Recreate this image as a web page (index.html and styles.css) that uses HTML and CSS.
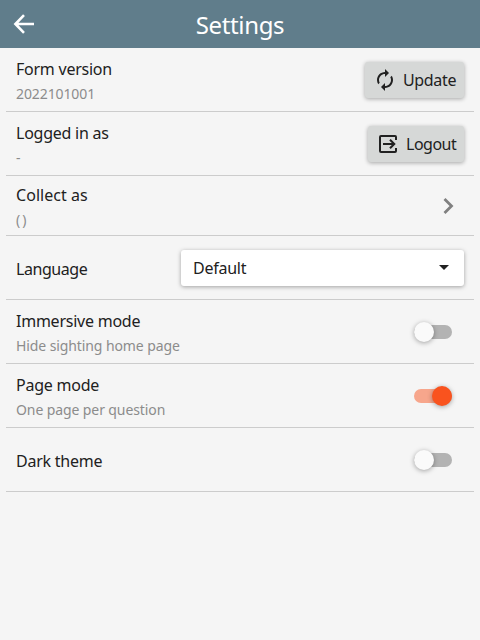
FILE: index.html
```html
<!DOCTYPE html>
<html lang="en">
<head>
<meta charset="utf-8">
<title>Settings</title>
<link rel="stylesheet" href="styles.css">
</head>
<body>
<header class="toolbar">
  <svg class="back" viewBox="0 0 24 24"><path d="M12 3.2 3.4 12l8.6 8.8M3.8 12H22"/></svg>
  <h1>Settings</h1>
</header>
<main class="list">
  <div class="row">
    <div class="text"><div class="label">Form version</div><div class="sub">2022101001</div></div>
    <button class="button"><svg class="icon" viewBox="0 0 24 24"><path d="M12 6v3l4-4-4-4v3c-4.42 0-8 3.58-8 8 0 1.57.46 3.03 1.24 4.26L6.7 14.8c-.45-.83-.7-1.79-.7-2.8 0-3.31 2.69-6 6-6zm6.76 1.74L17.3 9.2c.44.84.7 1.79.7 2.8 0 3.31-2.69 6-6 6v-3l-4 4 4 4v-3c4.42 0 8-3.58 8-8 0-1.57-.46-3.03-1.24-4.26z"/></svg><span>Update</span></button>
  </div>
  <div class="row">
    <div class="text"><div class="label">Logged in as</div><div class="sub">-</div></div>
    <button class="button logout"><svg class="icon outlined" viewBox="0 0 24 24"><path d="M20 8V5q0-1-1-1H5Q4 4 4 5v14q0 1 1 1h14q1 0 1-1v-3M7 12h11M14 7.7l4.3 4.3-4.3 4.3"/></svg><span>Logout</span></button>
  </div>
  <div class="row short">
    <div class="text"><div class="label loose">Collect as</div><div class="sub loose">()</div></div>
    <svg class="chevron" viewBox="0 0 24 24"><path d="m8.5 5 7 7-7 7"/></svg>
  </div>
  <div class="row">
    <div class="text"><div class="label tight">Language</div></div>
    <div class="select"><span>Default</span><i class="caret"></i></div>
  </div>
  <div class="row">
    <div class="text"><div class="label">Immersive mode</div><div class="sub">Hide sighting home page</div></div>
    <div class="switch"><i class="thumb"></i></div>
  </div>
  <div class="row">
    <div class="text"><div class="label">Page mode</div><div class="sub">One page per question</div></div>
    <div class="switch on"><i class="thumb"></i></div>
  </div>
  <div class="row">
    <div class="text"><div class="label">Dark theme</div></div>
    <div class="switch"><i class="thumb"></i></div>
  </div>
</main>
</body>
</html>
```
FILE: styles.css
```css
* { box-sizing: border-box; }
body {
  margin: 0;
  min-height: 640px;
  background: #f5f5f5;
  color: #212121;
  font: 16px/24px Tahoma, "Noto Sans", sans-serif;
  letter-spacing: -0.24px;
}
.toolbar {
  display: grid;
  grid-template-columns: 48px 1fr 48px;
  align-items: center;
  height: 48px;
  background: #607d8b;
  color: #fff;
}
.back { width: 24px; height: 24px; margin-left: 12px; fill: none; stroke: #fff; stroke-width: 2.6; }
.toolbar h1 { margin: 2px 0 0; text-align: center; font-size: 24px; line-height: 32px; font-weight: 400; letter-spacing: -0.35px; }
.list { padding: 0 6px; }
.row {
  display: flex;
  align-items: center;
  justify-content: space-between;
  height: 64px;
  padding: 0 10px;
  border-bottom: 1px solid #ccc;
}
.row.short { height: 60px; }
.text { padding-top: 2px; }
.label.loose { letter-spacing: 0.05px; }
.label.tight { letter-spacing: -0.45px; }
.sub { padding-top: 1px; margin-bottom: -1px; color: #8c8c8c; font-size: 14px; letter-spacing: -0.1px; }
.sub.loose { letter-spacing: 2px; }
.button {
  display: flex;
  align-items: center;
  gap: 6px;
  width: 99px;
  height: 36px;
  padding: 0 8px;
  border: 0;
  border-radius: 3px;
  background: #d6d8d7;
  color: #212121;
  font: inherit;
  letter-spacing: -0.35px;
  box-shadow: 0 1px 4px rgba(0, 0, 0, .33);
}
.button.logout { width: 96px; letter-spacing: -0.5px; }
.button span { padding-top: 1px; }
.icon { flex: none; width: 24px; height: 24px; fill: #212121; }
.icon.outlined { fill: none; stroke: #212121; stroke-width: 2; }
.chevron { width: 24px; height: 24px; margin-right: 4px; fill: none; stroke: #808080; stroke-width: 2.8; }
.select {
  display: flex;
  align-items: center;
  justify-content: space-between;
  width: 283px;
  height: 36px;
  padding: 0 15px 0 12px;
  border-radius: 3px;
  background: #fff;
  box-shadow: 0 1px 4px rgba(0, 0, 0, .35);
}
.caret { border: 5px solid transparent; border-top-color: #212121; border-bottom: 0; }
.switch {
  display: flex;
  align-items: center;
  width: 38px;
  height: 14px;
  margin-right: 12px;
  border-radius: 7px;
  background: #b3b3b3;
}
.thumb { flex: none; width: 20px; height: 20px; border-radius: 50%; background: #fafafa; box-shadow: 0 1px 5px rgba(0, 0, 0, .35); }
.switch.on { justify-content: flex-end; background: #f7a68c; }
.switch.on .thumb { background: #f9531e; }
```
